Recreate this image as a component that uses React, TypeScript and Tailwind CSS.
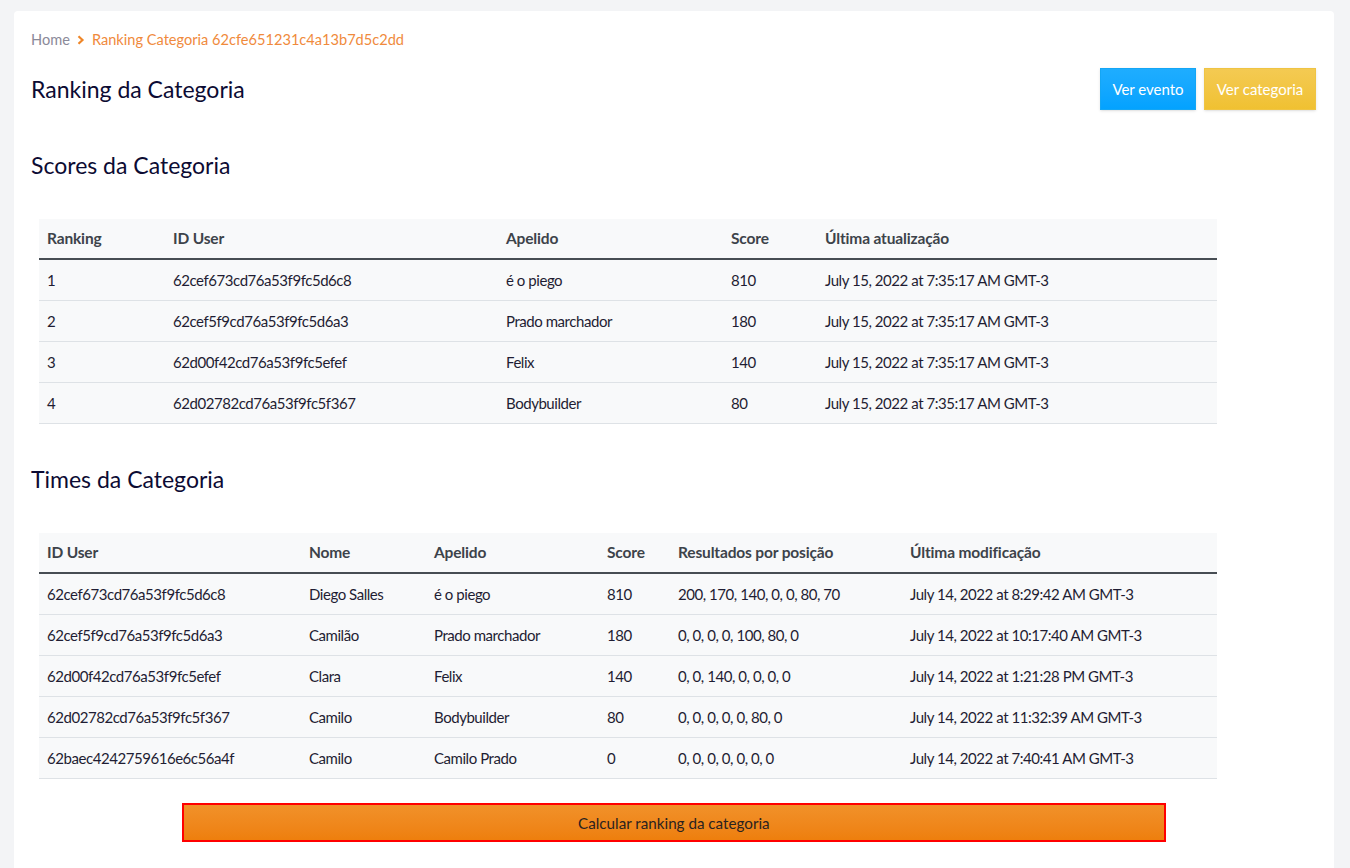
import React from "react";

const scores = [
  ["1", "62cef673cd76a53f9fc5d6c8", "é o piego", "810", "July 15, 2022 at 7:35:17 AM GMT-3"],
  ["2", "62cef5f9cd76a53f9fc5d6a3", "Prado marchador", "180", "July 15, 2022 at 7:35:17 AM GMT-3"],
  ["3", "62d00f42cd76a53f9fc5efef", "Felix", "140", "July 15, 2022 at 7:35:17 AM GMT-3"],
  ["4", "62d02782cd76a53f9fc5f367", "Bodybuilder", "80", "July 15, 2022 at 7:35:17 AM GMT-3"],
];

const times = [
  ["62cef673cd76a53f9fc5d6c8", "Diego Salles", "é o piego", "810", "200, 170, 140, 0, 0, 80, 70", "July 14, 2022 at 8:29:42 AM GMT-3"],
  ["62cef5f9cd76a53f9fc5d6a3", "Camilão", "Prado marchador", "180", "0, 0, 0, 0, 100, 80, 0", "July 14, 2022 at 10:17:40 AM GMT-3"],
  ["62d00f42cd76a53f9fc5efef", "Clara", "Felix", "140", "0, 0, 140, 0, 0, 0, 0", "July 14, 2022 at 1:21:28 PM GMT-3"],
  ["62d02782cd76a53f9fc5f367", "Camilo", "Bodybuilder", "80", "0, 0, 0, 0, 0, 80, 0", "July 14, 2022 at 11:32:39 AM GMT-3"],
  ["62baec4242759616e6c56a4f", "Camilo", "Camilo Prado", "0", "0, 0, 0, 0, 0, 0, 0", "July 14, 2022 at 7:40:41 AM GMT-3"],
];

function Table({ headers, widths, rows }: { headers: string[]; widths: number[]; rows: string[][] }) {
  return (
    <div className="ml-2 w-[1178px] bg-[#f8f9fa]">
      <div className="flex h-[41px] items-center border-b-2 border-[#474d53]">
        {headers.map((h, i) => (
          <div key={i} style={{ width: widths[i] }} className="shrink-0 px-2 text-[15.5px] font-bold text-[#3d434a] tracking-[-0.01em]">
            {h}
          </div>
        ))}
      </div>
      {rows.map((r, ri) => (
        <div key={ri} className="flex h-[41px] items-center border-b border-[#dee2e6]">
          {r.map((c, ci) => (
            <div key={ci} style={{ width: widths[ci] }} className="shrink-0 px-2 text-[15px] text-[#1f1d33] tracking-[-0.03em]">
              {c}
            </div>
          ))}
        </div>
      ))}
    </div>
  );
}

export default function App() {
  return (
    <div className="min-h-[868px] bg-[#f3f4f6] pt-[11px] pl-[14px] pr-[16px]" style={{ fontFamily: "Lato, 'Noto Sans', sans-serif" }}>
      <div className="min-h-[857px] rounded-t bg-white px-[17px] pt-[19px] pr-[18px]">
        <div className="flex h-[20px] items-center text-[14.6px] leading-[20px]">
          <span className="text-[#8b8a99]">Home</span>
          <svg className="mx-[7px]" width="8" height="10" viewBox="0 0 8 10">
            <path d="M1.5 1.2 L5.5 5 L1.5 8.8" fill="none" stroke="#ef8628" strokeWidth="2.2" />
          </svg>
          <span className="text-[#f08a3c]">Ranking Categoria 62cfe651231c4a13b7d5c2dd</span>
        </div>

        <div className="mt-[18px] flex h-[42px] items-center justify-between">
          <h1 className="text-[23px] text-[#0c0b33]">Ranking da Categoria</h1>
          <div className="flex gap-2">
            <button className="h-[42px] w-[96px] border border-[#14a6f5] bg-gradient-to-b from-[#1eadff] to-[#03a2ff] text-[15px] text-white shadow-sm">
              Ver evento
            </button>
            <button className="h-[42px] w-[112px] border border-[#efc444] bg-gradient-to-b from-[#f4ca52] to-[#f0c131] text-[15px] text-white shadow-sm">
              Ver categoria
            </button>
          </div>
        </div>

        <h2 className="mt-[39px] h-[32px] text-[23px] leading-[32px] text-[#0c0b33]">Scores da Categoria</h2>
        <div className="mt-[38px]">
          <Table
            headers={["Ranking", "ID User", "Apelido", "Score", "Última atualização"]}
            widths={[126, 333, 225, 94, 400]}
            rows={scores}
          />
        </div>

        <h2 className="mt-[39px] h-[32px] text-[23px] leading-[32px] text-[#0c0b33]">Times da Categoria</h2>
        <div className="mt-[38px]">
          <Table
            headers={["ID User", "Nome", "Apelido", "Score", "Resultados por posição", "Última modificação"]}
            widths={[262, 125, 173, 71, 232, 315]}
            rows={times}
          />
        </div>

        <div className="mt-[24px] flex justify-center pl-[1px]">
          <button className="h-[39px] w-[984px] border-2 border-[#ff0000] bg-gradient-to-b from-[#f19129] to-[#ee7f0c] text-[16px] text-[#2a2220]">
            <span className="inline-block scale-x-[0.95]">Calcular ranking da categoria</span>
          </button>
        </div>
      </div>
    </div>
  );
}
